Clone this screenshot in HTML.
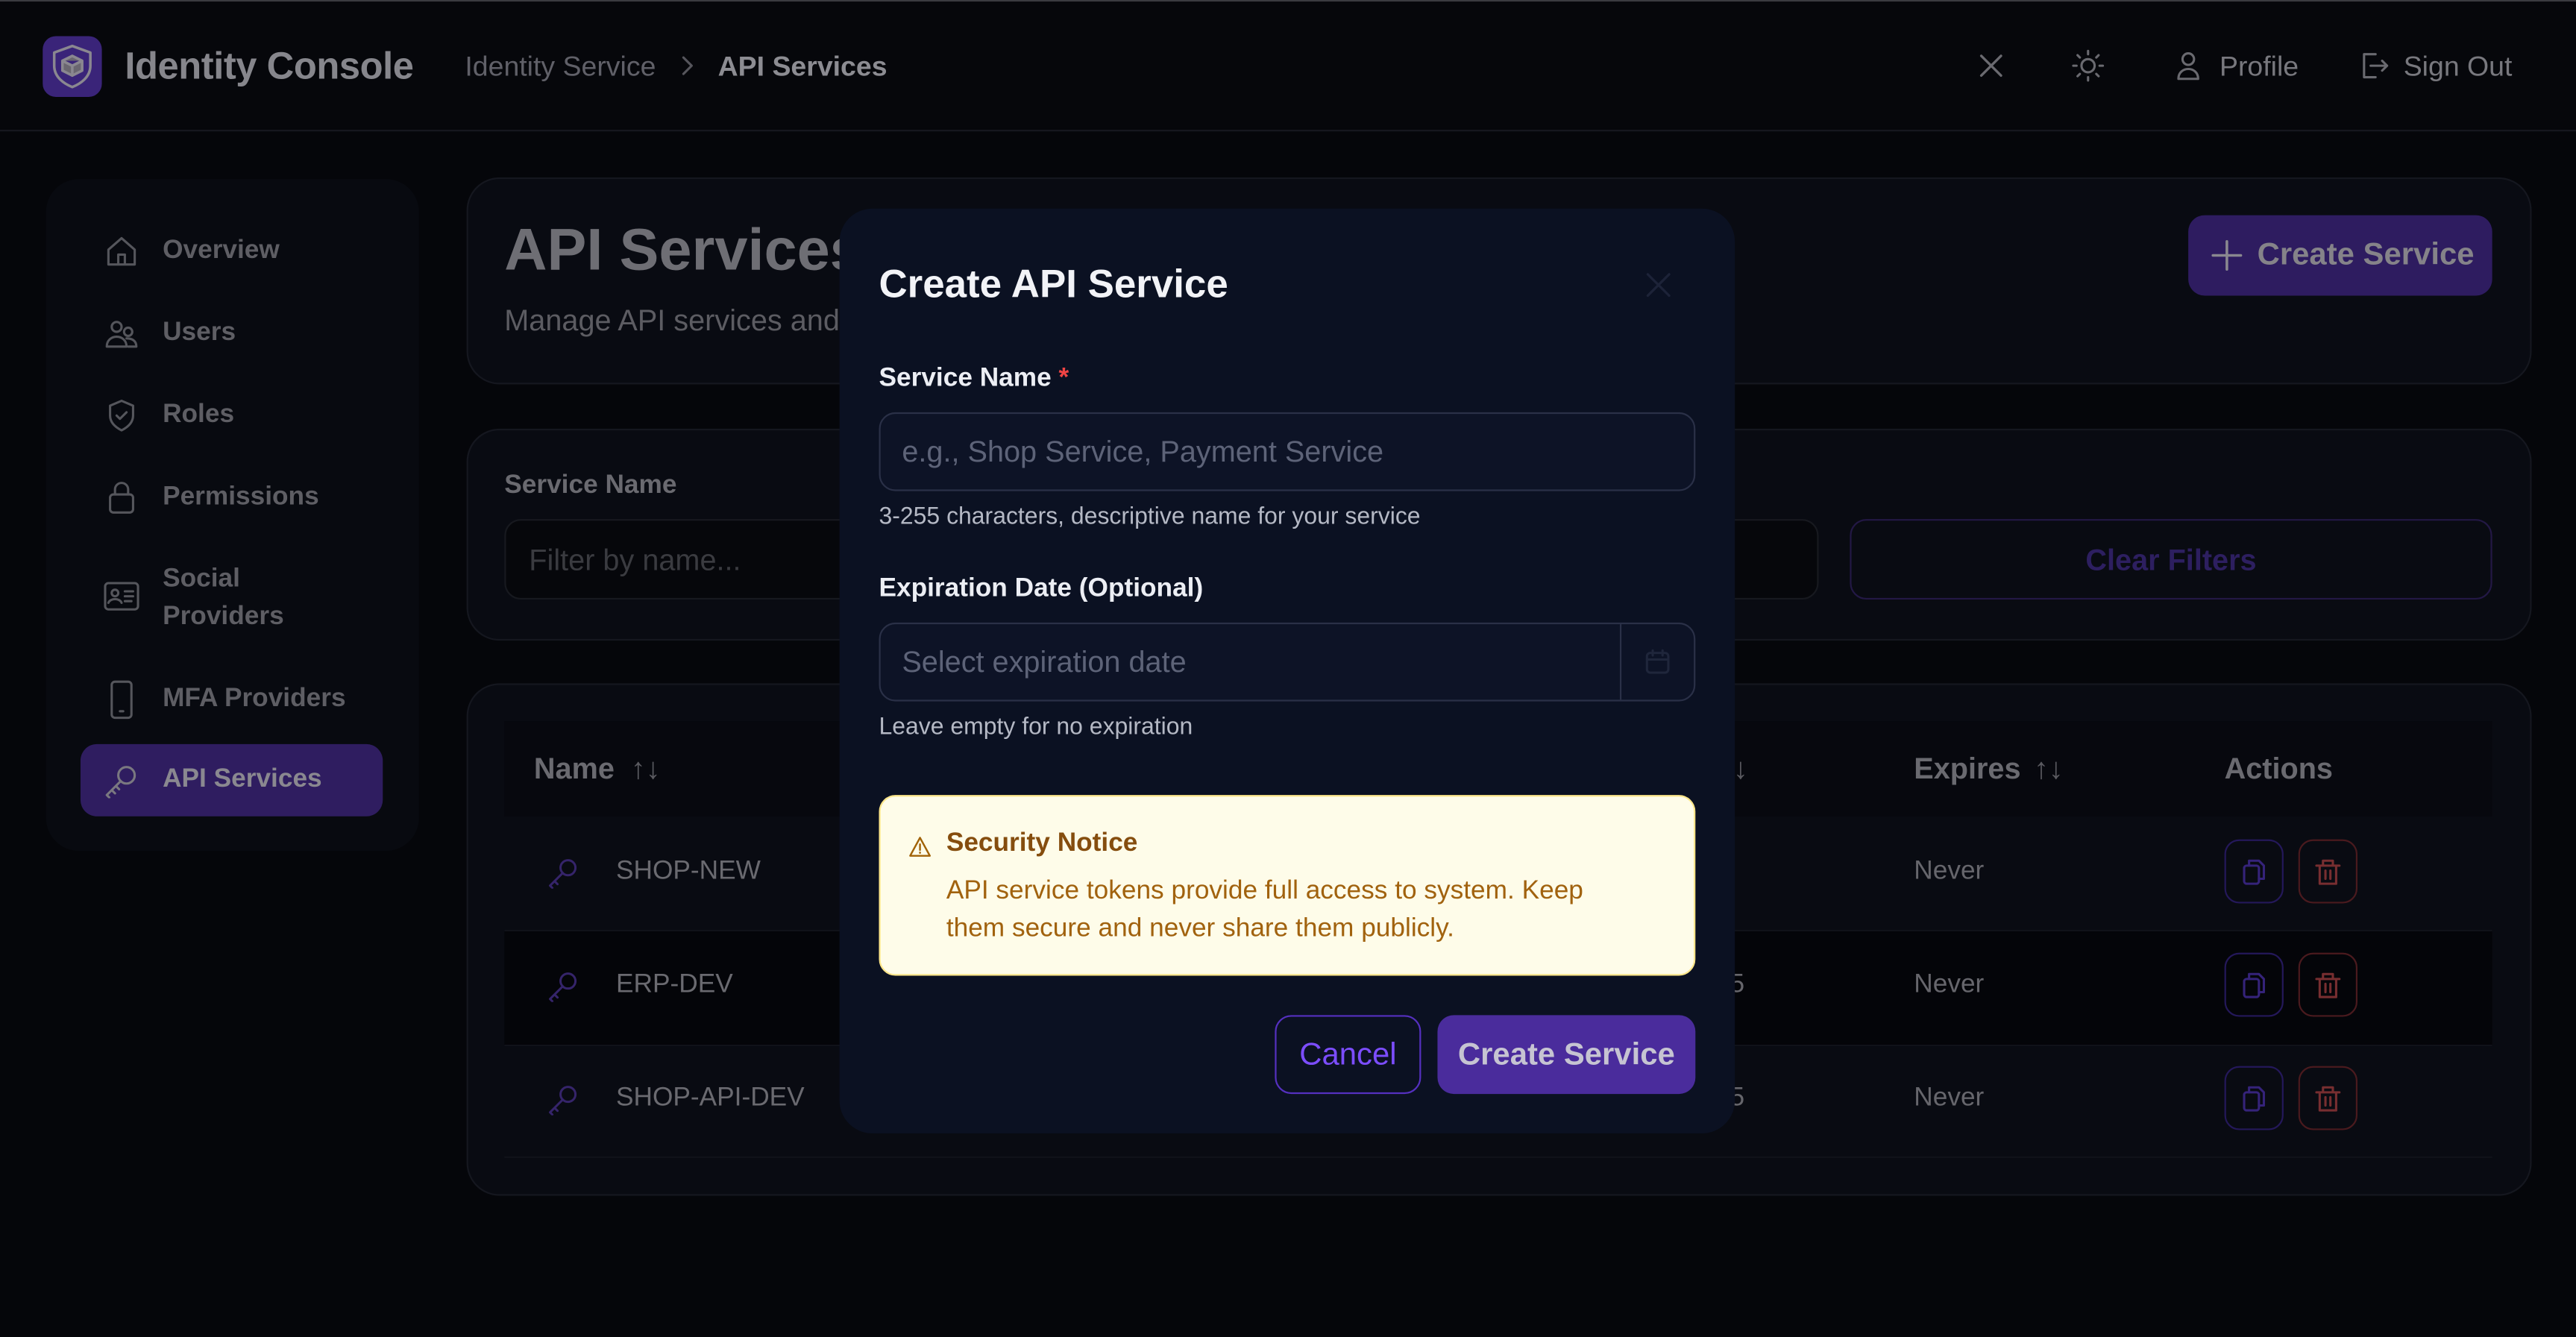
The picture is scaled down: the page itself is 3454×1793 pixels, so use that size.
<!DOCTYPE html>
<html><head><meta charset="utf-8"><style>
html,body{margin:0;padding:0;background:#06070b;overflow:hidden;width:3454px;height:1792px}
#w{position:absolute;left:0;top:0;width:1568px;height:814px;transform:scale(2.2028);transform-origin:0 0;font-family:"Liberation Sans",sans-serif;background:#05060a;border-top:1px solid #3a3b40;box-sizing:border-box}
.a{position:absolute}
.t{position:absolute;white-space:nowrap;line-height:1}
.card{position:absolute;background:#090b12;border:1px solid #15171f;border-radius:20px}
svg{position:absolute;fill:none;stroke-linecap:round;stroke-linejoin:round}
</style></head><body><div id="w">
<div class="a" style="left:0;top:0;width:1568px;height:78px;background:#06070b;border-bottom:1px solid #16171f"></div>
<div class="a" style="left:26px;top:21px;width:36px;height:37px;background:#3a2479;border-radius:8px"></div>
<svg style="left:29px;top:24px" width="30" height="31" viewBox="0 0 30 31" stroke="#8a8790" stroke-width="1.6"><path d="M15 3 L26 7 V15 C26 22 20 26 15 28 C10 26 4 22 4 15 V7 Z"/><path d="M15 9 L21 12 V18 L15 21 L9 18 V12 Z M9 12 L15 15 L21 12 M15 15 V21" fill="#6a6670"/></svg>
<div class="t" style="left:76px;top:28px;font-size:23px;font-weight:bold;color:#86868c;letter-spacing:-0.2px">Identity Console</div>
<div class="t" style="left:283px;top:31px;font-size:17px;color:#606068">Identity Service</div>
<svg style="left:412px;top:32px" width="12" height="14" viewBox="0 0 12 14" stroke="#55555c" stroke-width="1.4"><path d="M4 2 L9 7 L4 12"/></svg>
<div class="t" style="left:437px;top:31px;font-size:17px;font-weight:bold;color:#8c8c92">API Services</div>
<svg style="left:1204px;top:31px" width="16" height="16" viewBox="0 0 16 16" stroke="#6a6a70" stroke-width="1.5"><path d="M2 2L14 14M14 2L2 14"/></svg>
<svg style="left:1261px;top:29px" width="20" height="20" viewBox="0 0 20 20" stroke="#6a6a70" stroke-width="1.4"><circle cx="10" cy="10" r="4"/><path d="M10 1v2M10 17v2M1 10h2M17 10h2M3.6 3.6l1.4 1.4M15 15l1.4 1.4M3.6 16.4L5 15M15 5l1.4-1.4"/></svg>
<svg style="left:1324px;top:30px" width="16" height="18" viewBox="0 0 16 18" stroke="#6a6a70" stroke-width="1.4"><circle cx="8" cy="5" r="3.5"/><path d="M2 17c0-4 3-6 6-6s6 2 6 6z"/></svg>
<div class="t" style="left:1351px;top:31px;font-size:17px;color:#78787e">Profile</div>
<svg style="left:1436px;top:30px" width="18" height="18" viewBox="0 0 18 18" stroke="#6a6a70" stroke-width="1.4"><path d="M10 2H3v14h7M7 9h10M14 6l3 3-3 3"/></svg>
<div class="t" style="left:1463px;top:31px;font-size:17px;color:#78787e">Sign Out</div>

<!-- sidebar -->
<div class="a" style="left:28px;top:108px;width:227px;height:409px;background:#080a10;border-radius:20px"></div>
<svg style="left:64px;top:142px" width="20" height="20" viewBox="0 0 20 20" stroke="#55565c" stroke-width="1.4"><path d="M2 9L10 2l8 7v9H2z M8 18v-6h4v6"/></svg>
<div class="t" style="left:99px;top:144px;font-size:16px;font-weight:bold;color:#5e5e64">Overview</div>
<svg style="left:64px;top:192px" width="20" height="20" viewBox="0 0 20 20" stroke="#55565c" stroke-width="1.4"><circle cx="7" cy="6" r="3"/><circle cx="14" cy="9" r="2.5"/><path d="M1 18c0-4 3-6 6-6s6 2 6 6zM13 13c3 0 6 1 6 5h-5"/></svg>
<div class="t" style="left:99px;top:194px;font-size:16px;font-weight:bold;color:#5e5e64">Users</div>
<svg style="left:64px;top:242px" width="20" height="20" viewBox="0 0 20 20" stroke="#55565c" stroke-width="1.4"><path d="M10 1l7 3v6c0 4-3 7-7 9-4-2-7-5-7-9V4z M7 10l2 2 4-4"/></svg>
<div class="t" style="left:99px;top:244px;font-size:16px;font-weight:bold;color:#5e5e64">Roles</div>
<svg style="left:64px;top:291px" width="20" height="21" viewBox="0 0 20 21" stroke="#55565c" stroke-width="1.4"><rect x="3" y="9" width="14" height="11" rx="2"/><path d="M6 9V6a4 4 0 018 0v3"/></svg>
<div class="t" style="left:99px;top:294px;font-size:16px;font-weight:bold;color:#5e5e64">Permissions</div>
<svg style="left:63px;top:353px" width="22" height="18" viewBox="0 0 22 18" stroke="#55565c" stroke-width="1.4"><rect x="1" y="1" width="20" height="16" rx="2"/><circle cx="7" cy="7" r="2"/><path d="M3 13c1-3 7-3 8 0M13 6h5M13 9h5M13 12h4"/></svg>
<div class="t" style="left:99px;top:340px;font-size:16px;font-weight:bold;color:#5e5e64;line-height:23px;white-space:normal;width:100px">Social<br>Providers</div>
<svg style="left:66px;top:413px" width="16" height="24" viewBox="0 0 16 24" stroke="#55565c" stroke-width="1.4"><rect x="2" y="1" width="12" height="22" rx="2"/><path d="M7 19h2"/></svg>
<div class="t" style="left:99px;top:417px;font-size:16px;font-weight:bold;color:#5e5e64">MFA Providers</div>
<div class="a" style="left:49px;top:452px;width:184px;height:44px;background:#2f1d60;border-radius:10px"></div>
<svg style="left:63px;top:463px" width="22" height="22" viewBox="0 0 22 22" stroke="#7a7880" stroke-width="1.4"><circle cx="14" cy="8" r="5"/><path d="M10.5 11.5L2 20l1.5 1.5M5 17l2 2M7.5 14.5l2 2"/></svg>
<div class="t" style="left:99px;top:466px;font-size:16px;font-weight:bold;color:#8a8890">API Services</div>

<!-- header card -->
<div class="card" style="left:284px;top:107px;width:1255px;height:124px"></div>
<div class="t" style="left:307px;top:133px;font-size:36px;font-weight:bold;color:#6e6e74">API Services</div>
<div class="t" style="left:307px;top:185px;font-size:18px;color:#5c5c62">Manage API services and tokens</div>
<div class="a" style="left:1332px;top:130px;width:185px;height:49px;background:#2e1c60;border-radius:10px"></div>
<svg style="left:1346px;top:145px" width="19" height="19" viewBox="0 0 19 19" stroke="#8a8890" stroke-width="1.6"><path d="M9.5 1v17M1 9.5h17"/></svg>
<div class="t" style="left:1374px;top:145px;font-size:19px;font-weight:bold;color:#858389">Create Service</div>

<!-- filter card -->
<div class="card" style="left:284px;top:260px;width:1255px;height:127px"></div>
<div class="t" style="left:307px;top:287px;font-size:16px;font-weight:bold;color:#6a6a70">Service Name</div>
<div class="a" style="left:307px;top:315px;width:800px;height:49px;border:1px solid #17191f;border-radius:10px;box-sizing:border-box;background:#06070b"></div>
<div class="t" style="left:322px;top:331px;font-size:18px;color:#3a3b40">Filter by name...</div>
<div class="a" style="left:1126px;top:315px;width:391px;height:49px;border:1px solid #231845;border-radius:10px;box-sizing:border-box"></div>
<div class="t" style="left:1126px;top:331px;width:391px;text-align:center;font-size:18px;font-weight:bold;color:#2d1f60">Clear Filters</div>

<!-- table card -->
<div class="card" style="left:284px;top:415px;width:1255px;height:310px"></div>
<div class="a" style="left:307px;top:438px;width:1210px;height:58px;background:#07080e"></div>
<div class="a" style="left:307px;top:565px;width:1210px;height:69px;background:#040509;border-top:1px solid #101219;border-bottom:1px solid #101219"></div>
<div class="a" style="left:307px;top:703px;width:1210px;height:1px;background:#101219"></div>
<div class="t" style="left:325px;top:458px;font-size:18px;font-weight:bold;color:#6a6a70">Name</div>
<div class="t" style="left:384px;top:458px;font-size:18px;color:#5a5a60">↑↓</div>
<div class="t" style="left:1055px;top:458px;font-size:18px;color:#5a5a60">↓</div>
<div class="t" style="left:1165px;top:458px;font-size:18px;font-weight:bold;color:#6a6a70">Expires</div>
<div class="t" style="left:1238px;top:458px;font-size:18px;color:#5a5a60">↑↓</div>
<div class="t" style="left:1354px;top:458px;font-size:18px;font-weight:bold;color:#6a6a70">Actions</div>

<svg style="left:333px;top:520px" width="20" height="20" viewBox="0 0 22 22" stroke="#35246a" stroke-width="1.5"><circle cx="14" cy="8" r="5"/><path d="M10.5 11.5L2 20l1.5 1.5M5 17l2 2"/></svg>
<div class="t" style="left:375px;top:522px;font-size:16px;color:#6a6a70">SHOP-NEW</div>
<div class="t" style="left:1165px;top:522px;font-size:16px;color:#66666c">Never</div>
<svg style="left:333px;top:589px" width="20" height="20" viewBox="0 0 22 22" stroke="#35246a" stroke-width="1.5"><circle cx="14" cy="8" r="5"/><path d="M10.5 11.5L2 20l1.5 1.5M5 17l2 2"/></svg>
<div class="t" style="left:375px;top:591px;font-size:16px;color:#6a6a70">ERP-DEV</div>
<div class="t" style="left:1165px;top:591px;font-size:16px;color:#66666c">Never</div>
<div class="t" style="left:1053px;top:591px;font-size:16px;color:#66666c">5</div>
<svg style="left:333px;top:658px" width="20" height="20" viewBox="0 0 22 22" stroke="#35246a" stroke-width="1.5"><circle cx="14" cy="8" r="5"/><path d="M10.5 11.5L2 20l1.5 1.5M5 17l2 2"/></svg>
<div class="t" style="left:375px;top:660px;font-size:16px;color:#6a6a70">SHOP-API-DEV</div>
<div class="t" style="left:1165px;top:660px;font-size:16px;color:#66666c">Never</div>
<div class="t" style="left:1053px;top:660px;font-size:16px;color:#66666c">5</div>

<!-- action buttons -->
<div class="a" style="left:1354px;top:510px;width:36px;height:39px;border:1px solid #24185a;border-radius:9px;box-sizing:border-box"></div>
<div class="a" style="left:1399px;top:510px;width:36px;height:39px;border:1px solid #4a1a1e;border-radius:9px;box-sizing:border-box"></div>
<div class="a" style="left:1354px;top:579px;width:36px;height:39px;border:1px solid #24185a;border-radius:9px;box-sizing:border-box"></div>
<div class="a" style="left:1399px;top:579px;width:36px;height:39px;border:1px solid #4a1a1e;border-radius:9px;box-sizing:border-box"></div>
<div class="a" style="left:1354px;top:648px;width:36px;height:39px;border:1px solid #24185a;border-radius:9px;box-sizing:border-box"></div>
<div class="a" style="left:1399px;top:648px;width:36px;height:39px;border:1px solid #4a1a1e;border-radius:9px;box-sizing:border-box"></div>
<svg style="left:1364px;top:521px" width="16" height="17" viewBox="0 0 16 17" stroke="#35237a" stroke-width="1.4"><rect x="2" y="5" width="9" height="11" rx="1.5"/><path d="M5 5V2h6l3 3v8h-3"/></svg>
<svg style="left:1364px;top:590px" width="16" height="17" viewBox="0 0 16 17" stroke="#35237a" stroke-width="1.4"><rect x="2" y="5" width="9" height="11" rx="1.5"/><path d="M5 5V2h6l3 3v8h-3"/></svg>
<svg style="left:1364px;top:659px" width="16" height="17" viewBox="0 0 16 17" stroke="#35237a" stroke-width="1.4"><rect x="2" y="5" width="9" height="11" rx="1.5"/><path d="M5 5V2h6l3 3v8h-3"/></svg>
<svg style="left:1409px;top:521px" width="16" height="17" viewBox="0 0 16 17" stroke="#772e30" stroke-width="1.4"><path d="M1 5h14M5 5V2h6v3M3 5v11h10V5M6.5 8v5M9.5 8v5"/></svg>
<svg style="left:1409px;top:590px" width="16" height="17" viewBox="0 0 16 17" stroke="#772e30" stroke-width="1.4"><path d="M1 5h14M5 5V2h6v3M3 5v11h10V5M6.5 8v5M9.5 8v5"/></svg>
<svg style="left:1409px;top:659px" width="16" height="17" viewBox="0 0 16 17" stroke="#772e30" stroke-width="1.4"><path d="M1 5h14M5 5V2h6v3M3 5v11h10V5M6.5 8v5M9.5 8v5"/></svg>

<!-- modal -->
<div class="a" style="left:511px;top:126px;width:545px;height:563px;background:#0b1122;border-radius:20px"></div>
<div class="t" style="left:535px;top:161px;font-size:24px;font-weight:bold;color:#f2f3f7">Create API Service</div>
<svg style="left:1002px;top:165px" width="15" height="15" viewBox="0 0 15 15" stroke="#1d2338" stroke-width="1.5"><path d="M1 1l13 13M14 1L1 14"/></svg>
<div class="t" style="left:535px;top:222px;font-size:16px;font-weight:bold;color:#eceef4">Service Name <span style="color:#ef4444">*</span></div>
<div class="a" style="left:535px;top:250px;width:497px;height:48px;border:1px solid #2a3047;border-radius:10px;box-sizing:border-box;background:#0d1326"></div>
<div class="t" style="left:549px;top:265px;font-size:18px;color:#5d6378">e.g., Shop Service, Payment Service</div>
<div class="t" style="left:535px;top:307px;font-size:14.5px;color:#b4b8c4">3-255 characters, descriptive name for your service</div>
<div class="t" style="left:535px;top:350px;font-size:16px;font-weight:bold;color:#eceef4">Expiration Date (Optional)</div>
<div class="a" style="left:535px;top:378px;width:497px;height:48px;border:1px solid #2a3047;border-radius:10px;box-sizing:border-box;background:#0d1326"></div>
<div class="a" style="left:986px;top:379px;width:1px;height:46px;background:#2a3047"></div>
<svg style="left:1001px;top:394px" width="16" height="16" viewBox="0 0 16 16" stroke="#1f263b" stroke-width="1.4"><rect x="1.5" y="2.5" width="13" height="12" rx="2"/><path d="M1.5 6.5h13M5 1v3M11 1v3"/></svg>
<div class="t" style="left:549px;top:393px;font-size:18px;color:#5d6378">Select expiration date</div>
<div class="t" style="left:535px;top:435px;font-size:14.5px;color:#b4b8c4">Leave empty for no expiration</div>
<div class="a" style="left:535px;top:483px;width:497px;height:110px;background:#fefce9;border:1px solid #fde68a;border-radius:10px;box-sizing:border-box"></div>
<svg style="left:553px;top:508px" width="14" height="13" viewBox="0 0 14 13" stroke="#a16207" stroke-width="1.1"><path d="M7 1L13 12H1Z M7 5v3.5M7 10v.3"/></svg>
<div class="t" style="left:576px;top:505px;font-size:16px;font-weight:bold;color:#854d0e">Security Notice</div>
<div class="t" style="left:576px;top:530px;font-size:16px;color:#a1620e;line-height:23px;white-space:normal;width:415px">API service tokens provide full access to system. Keep them secure and never share them publicly.</div>
<div class="a" style="left:776px;top:617px;width:89px;height:48px;border:1px solid #5530c0;border-radius:10px;box-sizing:border-box"></div>
<div class="t" style="left:776px;top:632px;width:89px;text-align:center;font-size:19px;color:#7c4dff">Cancel</div>
<div class="a" style="left:875px;top:617px;width:157px;height:48px;background:#4a2c9c;border-radius:10px"></div>
<div class="t" style="left:875px;top:632px;width:157px;text-align:center;font-size:19px;font-weight:bold;color:#c6c4d2">Create Service</div>
</div></body></html>
